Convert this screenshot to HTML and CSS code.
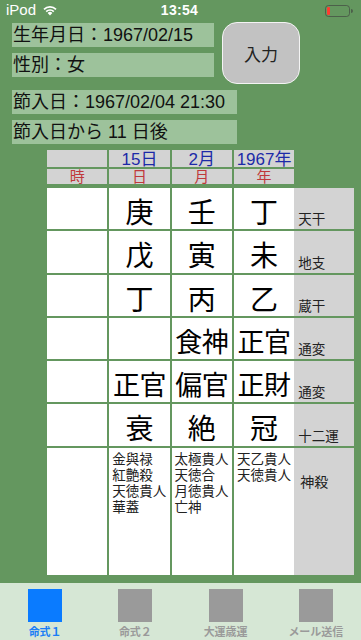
FILE: index.html
```html
<!DOCTYPE html>
<html lang="ja">
<head>
<meta charset="utf-8">
<link rel="stylesheet" href="styles.css">
</head>
<body>
<div class="screen">
  <div class="status">
    <div class="status-left">
      <span class="carrier">iPod</span>
      <svg class="wifi" width="16" height="12" viewBox="0 0 16 12">
        <path d="M8 11.5 L5.6 9 A3.4 3.4 0 0 1 10.4 9 Z" fill="#fff"/>
        <path d="M3.6 7 A6.2 6.2 0 0 1 12.4 7 L11.2 8.2 A4.5 4.5 0 0 0 4.8 8.2 Z" fill="#fff"/>
        <path d="M1.4 4.8 A9.3 9.3 0 0 1 14.6 4.8 L13.4 6 A7.6 7.6 0 0 0 2.6 6 Z" fill="#fff"/>
      </svg>
    </div>
    <div class="clock">13:54</div>
    <div class="status-right">
      <svg width="28" height="12" viewBox="0 0 28 12">
        <rect x="0.5" y="0.5" width="24" height="11" rx="3" fill="none" stroke="#3c3c3c" stroke-opacity="0.6"/>
        <rect x="2" y="2" width="3" height="8" rx="1" fill="#ff3b30"/>
        <path d="M26 4 A2 2 0 0 1 26 8 Z" fill="#3c3c3c" fill-opacity="0.6"/>
      </svg>
    </div>
  </div>

  <div class="top">
    <div class="top-labels">
      <div class="label w1">生年月日：1967/02/15</div>
      <div class="label w1">性別：女</div>
    </div>
    <div class="btn">入力</div>
  </div>

  <div class="info">
    <div class="label w2">節入日：1967/02/04 21:30</div>
    <div class="label w2">節入日から 11 日後</div>
  </div>

  <div class="table">
    <div class="head head1">
      <div class="hc"></div>
      <div class="hc">15日</div>
      <div class="hc">2月</div>
      <div class="hc">1967年</div>
    </div>
    <div class="head head2">
      <div class="hc">時</div>
      <div class="hc">日</div>
      <div class="hc">月</div>
      <div class="hc">年</div>
    </div>
    <div class="body">
      <div class="row">
        <div class="c"></div><div class="c big">庚</div><div class="c big">壬</div>
        <div class="pair"><div class="c big">丁</div><div class="lab">天干</div></div>
      </div>
      <div class="row">
        <div class="c"></div><div class="c big">戊</div><div class="c big">寅</div>
        <div class="pair"><div class="c big">未</div><div class="lab">地支</div></div>
      </div>
      <div class="row">
        <div class="c"></div><div class="c big">丁</div><div class="c big">丙</div>
        <div class="pair"><div class="c big">乙</div><div class="lab">蔵干</div></div>
      </div>
      <div class="row">
        <div class="c"></div><div class="c big"></div><div class="c big two">食神</div>
        <div class="pair"><div class="c big two">正官</div><div class="lab">通変</div></div>
      </div>
      <div class="row">
        <div class="c"></div><div class="c big two">正官</div><div class="c big two">偏官</div>
        <div class="pair"><div class="c big two">正財</div><div class="lab">通変</div></div>
      </div>
      <div class="row">
        <div class="c"></div><div class="c big">衰</div><div class="c big">絶</div>
        <div class="pair"><div class="c big">冠</div><div class="lab">十二運</div></div>
      </div>
      <div class="row last">
        <div class="c"></div>
        <div class="c list">金與禄<br>紅艶殺<br>天徳貴人<br>華蓋</div>
        <div class="c list">太極貴人<br>天徳合<br>月徳貴人<br>亡神</div>
        <div class="pair"><div class="c list">天乙貴人<br>天徳貴人</div><div class="lab top">神殺</div></div>
      </div>
    </div>
  </div>

  <div class="tabbar">
    <div class="tab active"><div class="ico"></div><div class="tl">命式１</div></div>
    <div class="tab"><div class="ico"></div><div class="tl">命式２</div></div>
    <div class="tab"><div class="ico"></div><div class="tl">大運歳運</div></div>
    <div class="tab"><div class="ico"></div><div class="tl">メール送信</div></div>
  </div>
</div>
</body>
</html>
```

FILE: styles.css
```css
* { box-sizing: border-box; }
html, body { margin: 0; padding: 0; }
body {
  width: 361px;
  height: 640px;
  overflow: hidden;
  background: #64975f;
  font-family: "Liberation Sans", "Noto Sans CJK JP", sans-serif;
  color: #000;
}
.screen {
  width: 361px;
  height: 640px;
  display: flex;
  flex-direction: column;
}
.status {
  height: 20px;
  display: flex;
  align-items: center;
  justify-content: space-between;
  padding: 0 8px 0 6px;
  color: #fff;
  font-family: "Liberation Sans", "Noto Sans", sans-serif;
  font-size: 15px;
}
.status-left { display: flex; align-items: center; gap: 6px; width: 80px; }
.carrier { line-height: 20px; }
.wifi { margin-top: -1px; }
.clock {
  font-weight: bold;
  font-size: 14px;
  letter-spacing: 0.3px;
}
.status-right { width: 80px; display: flex; justify-content: flex-end; padding-top: 1px; }

.top {
  display: flex;
  padding: 2px 0 0 12px;
  gap: 8px;
}
.top-labels {
  display: flex;
  flex-direction: column;
  gap: 6px;
  padding-top: 1px;
}
.label {
  background: #9dc29b;
  height: 24px;
  font-size: 18px;
  line-height: 24px;
  white-space: nowrap;
  padding-left: 1px;
  color: #111;
}
.w1 { width: 202px; }
.w2 { width: 225px; }
.btn {
  width: 78px;
  height: 62px;
  background: #c2c2c2;
  border: 1.5px solid #f4f4f4;
  border-radius: 15px;
  display: flex;
  align-items: center;
  justify-content: center;
  font-size: 17px;
  color: #222;
}
.info {
  display: flex;
  flex-direction: column;
  gap: 6px;
  padding: 6px 0 0 12px;
}

.table {
  padding: 6px 0 0 47px;
}
.head {
  display: grid;
  grid-template-columns: repeat(4, 60.3px);
  column-gap: 2px;
}
.head1 { height: 17px; margin-bottom: 2px; }
.head2 { height: 15px; margin-bottom: 4px; }
.hc {
  background: #d3d3d3;
  text-align: center;
  white-space: nowrap;
  overflow: visible;
}
.head1 .hc {
  color: #1c2aa8;
  font-size: 17px;
  line-height: 17px;
  height: 17px;
  padding-top: 1px;
}
.head2 .hc {
  color: #c0393b;
  font-size: 15px;
  line-height: 15px;
  height: 15px;
}
.body {
  display: flex;
  flex-direction: column;
  gap: 2px;
}
.row {
  display: grid;
  grid-template-columns: 60.3px 60.3px 60.3px 120.3px;
  grid-template-rows: 100%;
  column-gap: 2px;
  height: 41.3px;
}
.row.last { height: 127px; }
.pair { display: flex; }
.pair .c { width: 60.3px; flex: none; }
.c {
  background: #fff;
}
.big {
  font-family: "Noto Sans CJK JP", sans-serif;
  font-size: 28px;
  line-height: 34px;
  padding-top: 6px;
  text-align: center;
  white-space: nowrap;
}
.big.two { font-size: 27px; letter-spacing: -0.5px; }
.lab {
  width: 60px;
  background: #d3d3d3;
  font-family: "Noto Sans CJK JP", sans-serif;
  font-size: 13.5px;
  line-height: 16px;
  color: #222;
  display: flex;
  align-items: flex-end;
  padding: 0 0 3px 4px;
  white-space: nowrap;
}
.lab.top {
  align-items: flex-start;
  padding: 25px 0 0 6px;
  font-size: 14px;
}
.list {
  font-family: "Noto Sans CJK JP", sans-serif;
  font-size: 13.5px;
  line-height: 16px;
  padding: 2px 0 0 3px;
  color: #222;
  white-space: nowrap;
}

.tabbar {
  margin-top: 8px;
  flex: 1;
  background: #d6e7d5;
  display: grid;
  grid-template-columns: repeat(4, 1fr);
}
.tab {
  display: flex;
  flex-direction: column;
  align-items: center;
  padding-top: 6px;
}
.ico {
  width: 34px;
  height: 33px;
  background: #9a9a9a;
}
.tab.active .ico { background: #0a7bff; }
.tl {
  font-family: "Noto Sans CJK JP", sans-serif;
  font-size: 11px;
  font-weight: bold;
  color: #9a9a9a;
  margin-top: 2px;
  line-height: 14px;
}
.tab.active .tl { color: #1a7df5; }
```
